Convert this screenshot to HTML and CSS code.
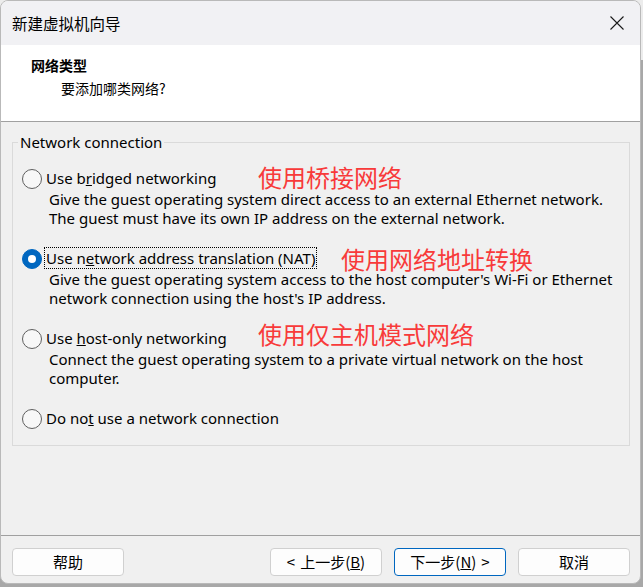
FILE: index.html
```html
<!DOCTYPE html>
<html lang="zh-CN">
<head>
<meta charset="utf-8">
<title>新建虚拟机向导</title>
<link rel="stylesheet" href="styles.css">
</head>
<body>
<div class="window">
  <div class="titlebar">
    <span class="title">新建虚拟机向导</span>
    <svg class="close" width="14" height="14" viewBox="0 0 14 14"><path d="M0.5 0.5 L13.5 13.5 M13.5 0.5 L0.5 13.5" stroke="#1a1a1a" stroke-width="1.1" fill="none"/></svg>
  </div>
  <div class="header">
    <div class="h-title">网络类型</div>
    <div class="h-sub">要添加哪类网络?</div>
  </div>
  <div class="body">
    <fieldset class="group">
      <legend>Network connection</legend>
      <div class="option">
        <div class="opt-row">
          <span class="radio"></span>
          <span class="label">Use b<u>r</u>idged networking</span>
          <span class="note note-1">使用桥接网络</span>
        </div>
        <div class="desc">Give the guest operating system direct access to an external Ethernet network.<br>The guest must have its own IP address on the external network.</div>
      </div>
      <div class="option">
        <div class="opt-row">
          <span class="radio checked"></span>
          <span class="label focused">Use n<u>e</u>twork address translation (NAT)</span>
          <span class="note note-2">使用网络地址转换</span>
        </div>
        <div class="desc">Give the guest operating system access to the host computer's Wi-Fi or Ethernet<br>network connection using the host's IP address.</div>
      </div>
      <div class="option">
        <div class="opt-row">
          <span class="radio"></span>
          <span class="label">Use <u>h</u>ost-only networking</span>
          <span class="note note-3">使用仅主机模式网络</span>
        </div>
        <div class="desc">Connect the guest operating system to a private virtual network on the host<br>computer.</div>
      </div>
      <div class="option">
        <div class="opt-row">
          <span class="radio"></span>
          <span class="label">Do no<u>t</u> use a network connection</span>
        </div>
      </div>
    </fieldset>
  </div>
  <div class="footer">
    <button class="btn btn-help">帮助</button>
    <button class="btn"><span class="arrow-l">&lt;</span>上一步(<u>B</u>)</button>
    <button class="btn btn-primary">下一步(<u>N</u>)<span class="arrow-r">&gt;</span></button>
    <button class="btn">取消</button>
  </div>
</div>
</body>
</html>
```
FILE: styles.css
```css
html, body {
  margin: 0;
  padding: 0;
}
body {
  background: linear-gradient(#ececec 0, #ececec 60px, #a8a8a8 60px);
  width: 643px;
  height: 587px;
  overflow: hidden;
}
.window {
  width: 641px;
  height: 584px;
  box-sizing: border-box;
  border: 1px solid #b9b9b9;
  border-radius: 8px;
  overflow: hidden;
  display: flex;
  flex-direction: column;
  background: #f0f0f0;
  color: #000;
  font-family: "Noto Sans", "Noto Sans CJK SC", sans-serif;
  font-size: 15px;
}
.titlebar {
  height: 44px;
  flex: none;
  background: #f1f1f4;
  display: flex;
  align-items: center;
  justify-content: space-between;
  padding: 0 16px 0 11px;
}
.title {
  font-family: "Noto Sans CJK SC", sans-serif;
  font-size: 15.5px;
  line-height: 20px;
}
.close {
  display: block;
}
.header {
  flex: none;
  height: 76px;
  box-sizing: content-box;
  background: #fff;
  border-bottom: 1px solid #a0a0a0;
  padding-left: 30px;
  font-family: "Noto Sans CJK SC", sans-serif;
  font-size: 14px;
}
.h-title {
  font-weight: bold;
  line-height: 20px;
  margin-top: 10px;
}
.h-sub {
  line-height: 20px;
  margin-top: 3px;
  padding-left: 30px;
}
.body {
  flex: 1;
  padding: 0 10px 0 11px;
}
.group {
  margin: 10px 0 0;
  border: 1px solid #dadada;
  padding: 15px 0 15px 9px;
  display: flex;
  flex-direction: column;
  gap: 19px;
}
.group legend {
  line-height: 20px;
  padding: 0 2px;
  margin-left: -4px;
}
.opt-row {
  height: 23px;
  display: flex;
  align-items: center;
  position: relative;
}
.radio {
  width: 20px;
  height: 20px;
  box-sizing: border-box;
  border-radius: 50%;
  border: 1px solid #5f5f5f;
  background: #f7f7f7;
  flex: none;
  position: relative;
}
.radio.checked {
  background: #0067c0;
  border-color: #0067c0;
}
.radio.checked::after {
  content: "";
  position: absolute;
  left: 5px;
  top: 5px;
  width: 8px;
  height: 8px;
  border-radius: 50%;
  background: #fff;
}
.label {
  margin-left: 3px;
  padding: 0 1px;
  line-height: 20px;
  position: relative;
  top: -1px;
}
.label.focused {
  outline: 1px dotted #000;
}
.desc {
  padding-left: 27px;
  line-height: 19px;
}
.note {
  position: absolute;
  font-family: "Noto Sans CJK SC", sans-serif;
  font-size: 24px;
  line-height: 22px;
  color: #f83a3a;
  white-space: nowrap;
}
.note-1 { left: 236px; top: -1px; }
.note-2 { left: 319px; top: 1px; }
.note-3 { left: 236px; top: -4px; }
.footer {
  flex: none;
  height: 48px;
  box-sizing: border-box;
  border-top: 1px solid #a0a0a0;
  padding: 12px 10px 0 11px;
  display: flex;
  align-items: flex-start;
  gap: 12px;
}
.btn {
  width: 112px;
  height: 28px;
  box-sizing: border-box;
  border: 1px solid #d0d0d0;
  border-radius: 4px;
  background: #fdfdfd;
  font-family: "Noto Sans CJK SC", sans-serif;
  font-size: 15px;
  color: #000;
  padding: 0;
  line-height: 20px;
}
.arrow-l {
  margin-right: 5px;
}
.arrow-r {
  margin-left: 5px;
}
.btn-help {
  margin-right: auto;
}
.btn-primary {
  border-color: #0067c0;
}
```
